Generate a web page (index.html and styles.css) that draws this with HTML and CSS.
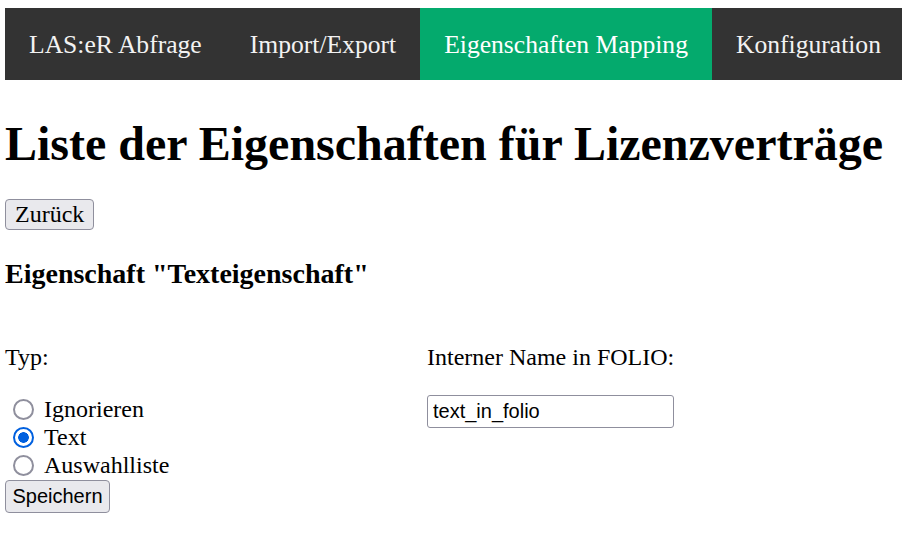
FILE: index.html
```html
<!DOCTYPE html>
<html lang="de">
<head>
<meta charset="utf-8">
<title>Eigenschaften Mapping</title>
<link rel="stylesheet" href="styles.css">
</head>
<body>
<nav class="topnav">
  <a class="nav-item" href="#">LAS:eR Abfrage</a>
  <a class="nav-item" href="#">Import/Export</a>
  <a class="nav-item active" href="#">Eigenschaften Mapping</a>
  <a class="nav-item" href="#">Konfiguration</a>
</nav>
<h1 class="title">Liste der Eigenschaften für Lizenzverträge</h1>
<button class="btn btn-back" type="button">Zurück</button>
<h3 class="subtitle">Eigenschaft "Texteigenschaft"</h3>
<form class="form">
  <div class="columns">
    <div class="col col-left">
      <p class="label">Typ:</p>
      <div class="radio-row"><input class="radio" type="radio" name="typ" id="r1"><label for="r1">Ignorieren</label></div>
      <div class="radio-row"><input class="radio" type="radio" name="typ" id="r2" checked><label for="r2">Text</label></div>
      <div class="radio-row"><input class="radio" type="radio" name="typ" id="r3"><label for="r3">Auswahlliste</label></div>
    </div>
    <div class="col col-right">
      <p class="label">Interner Name in FOLIO:</p>
      <input class="text-input" type="text" value="text_in_folio">
    </div>
  </div>
  <button class="btn btn-save" type="button">Speichern</button>
</form>
</body>
</html>
```

FILE: styles.css
```css
html, body {
  background: #fff;
}
body {
  margin: 8px 0 0 5px;
  font-family: "Liberation Serif", "Times New Roman", serif;
  font-size: 24px;
  color: #000;
}
.topnav {
  display: flex;
  background: #333;
  height: 72px;
  overflow: hidden;
}
.nav-item {
  display: block;
  padding: 22px 24px 20px 24px;
  font-size: 25.6px;
  line-height: 30px;
  color: #f2f2f2;
  text-decoration: none;
  white-space: nowrap;
}
.nav-item.active {
  background: #04aa6d;
  color: #fff;
}
.title {
  font-size: 48px;
  font-weight: bold;
  margin: 36px 0 28px 0;
  line-height: 55px;
}
.btn {
  display: block;
  background: #e9e9ed;
  border: 1px solid #8f8f9d;
  border-radius: 4px;
  color: #000;
  margin: 0;
  cursor: pointer;
}
.btn-back {
  font-family: "Liberation Serif", "Times New Roman", serif;
  font-size: 24px;
  height: 31px;
  padding: 0 9px;
  line-height: 27px;
}
.subtitle {
  font-size: 28px;
  font-weight: bold;
  margin: 28px 0 29px 0;
  line-height: 32px;
}
.form {
  margin: 0;
}
.columns {
  display: flex;
}
.col-left {
  width: 422px;
}
.label {
  margin: 24px 0 24px 0;
  line-height: 28px;
}
.radio-row {
  display: flex;
  align-items: center;
  height: 28.2px;
}
.radio {
  appearance: none;
  -webkit-appearance: none;
  width: 21px;
  height: 21px;
  margin: 1px 10px 0 8px;
  border: 2.5px solid #8f8f9d;
  border-radius: 50%;
  background: #fff;
  box-sizing: border-box;
  flex: none;
}
.radio:checked {
  border: 2.5px solid #0060df;
  background: radial-gradient(circle, #0060df 0 5px, #fff 5.6px);
}
.radio-row label {
  line-height: 28px;
}
.text-input {
  display: block;
  box-sizing: border-box;
  width: 247px;
  height: 33px;
  margin-top: 1px;
  padding: 0 5px;
  border: 1px solid #8f8f9d;
  border-radius: 3px;
  font-family: "Liberation Sans", Arial, sans-serif;
  font-size: 20px;
  color: #000;
  background: #fff;
}
.btn-save {
  font-family: "Liberation Sans", Arial, sans-serif;
  font-size: 20px;
  height: 33px;
  width: 105px;
  padding: 0;
  margin-top: 0;
}
```
